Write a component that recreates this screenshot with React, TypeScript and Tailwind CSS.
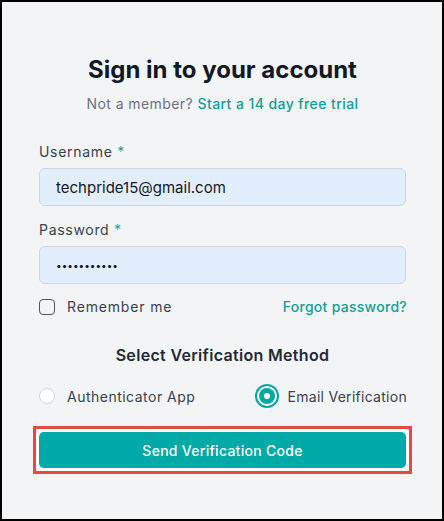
import * as React from "react"

const font = { fontFamily: "Inter, 'Noto Sans', sans-serif" }

export default function App() {
  const [method, setMethod] = React.useState<"app" | "email">("email")

  return (
    <div
      style={font}
      className="box-border flex h-[521px] w-[444px] flex-col border-2 border-black bg-[#f3f4f6] pt-[52px] pr-[36px] pl-[37px]"
    >
      <h1 className="text-center text-[24px] leading-8 font-bold text-[#111827]">
        Sign in to your account
      </h1>
      <p className="mt-2 text-center text-[14px] leading-5 tracking-[0.03em] text-[#6b7280]">
        Not a member?{" "}
        <a href="#" className="font-medium text-[#0f9f9a]">
          Start a 14 day free trial
        </a>
      </p>

      <label className="mt-7 text-[14px] leading-5 tracking-[0.05em] text-[#374151]">
        Username <span className="text-[#14a8a3]">*</span>
      </label>
      <input
        type="email"
        defaultValue="techpride15@gmail.com"
        className="mt-1.5 h-[38px] w-full rounded-md border border-[#d1d5db] bg-[#e3eefc] px-4 text-[15px] text-[#111827] outline-none"
      />

      <label className="mt-[14px] text-[14px] leading-5 tracking-[0.05em] text-[#374151]">
        Password <span className="text-[#14a8a3]">*</span>
      </label>
      <input
        type="password"
        defaultValue="techpride15"
        className="mt-1.5 h-[38px] w-full rounded-md border border-[#d1d5db] bg-[#e3eefc] px-4 text-[10px] text-[#111827] outline-none"
      />

      <div className="mt-[13px] flex items-center justify-between text-[14px] leading-5">
        <label className="flex items-center gap-3 tracking-[0.06em] text-[#374151]">
          <span className="h-4 w-4 rounded-[4px] border-[1.5px] border-[#4b5563] bg-transparent" />
          Remember me
        </label>
        <a href="#" className="-mr-px font-medium tracking-[0.02em] text-[#0f9f9a]">
          Forgot password?
        </a>
      </div>

      <h2 className="mt-[26px] text-center text-[16px] leading-6 font-semibold tracking-[0.02em] text-[#1f2937]">
        Select Verification Method
      </h2>

      <div className="mt-[17px] flex h-6 items-center justify-between text-[14px] text-[#374151]">
        <button
          type="button"
          onClick={() => setMethod("app")}
          className="flex items-center gap-3 tracking-[0.035em]"
        >
          {method === "app" ? (
            <span className="flex h-4 w-4 items-center justify-center rounded-full bg-[#00a8a5] shadow-[0_0_0_2px_#fff,0_0_0_4px_#00a8a5]">
              <span className="h-1.5 w-1.5 rounded-full bg-white" />
            </span>
          ) : (
            <span className="h-4 w-4 rounded-full border border-[#d1d5db] bg-white" />
          )}
          Authenticator App
        </button>
        <button
          type="button"
          onClick={() => setMethod("email")}
          className="-mr-px flex items-center gap-[13px] tracking-[0.02em]"
        >
          {method === "email" ? (
            <span className="flex h-4 w-4 items-center justify-center rounded-full bg-[#00a8a5] shadow-[0_0_0_2px_#fff,0_0_0_4px_#00a8a5]">
              <span className="h-1.5 w-1.5 rounded-full bg-white" />
            </span>
          ) : (
            <span className="h-4 w-4 rounded-full border border-[#d1d5db] bg-white" />
          )}
          Email Verification
        </button>
      </div>

      <div className="-mx-[6px] mt-[18px] border-[3px] border-[#e5493f] bg-[#fafafa] p-[3px]">
        <button
          type="button"
          className="h-9 w-full rounded-[5px] bg-[#01a9a7] text-[14px] font-medium tracking-[0.02em] text-white"
        >
          Send Verification Code
        </button>
      </div>
    </div>
  )
}
